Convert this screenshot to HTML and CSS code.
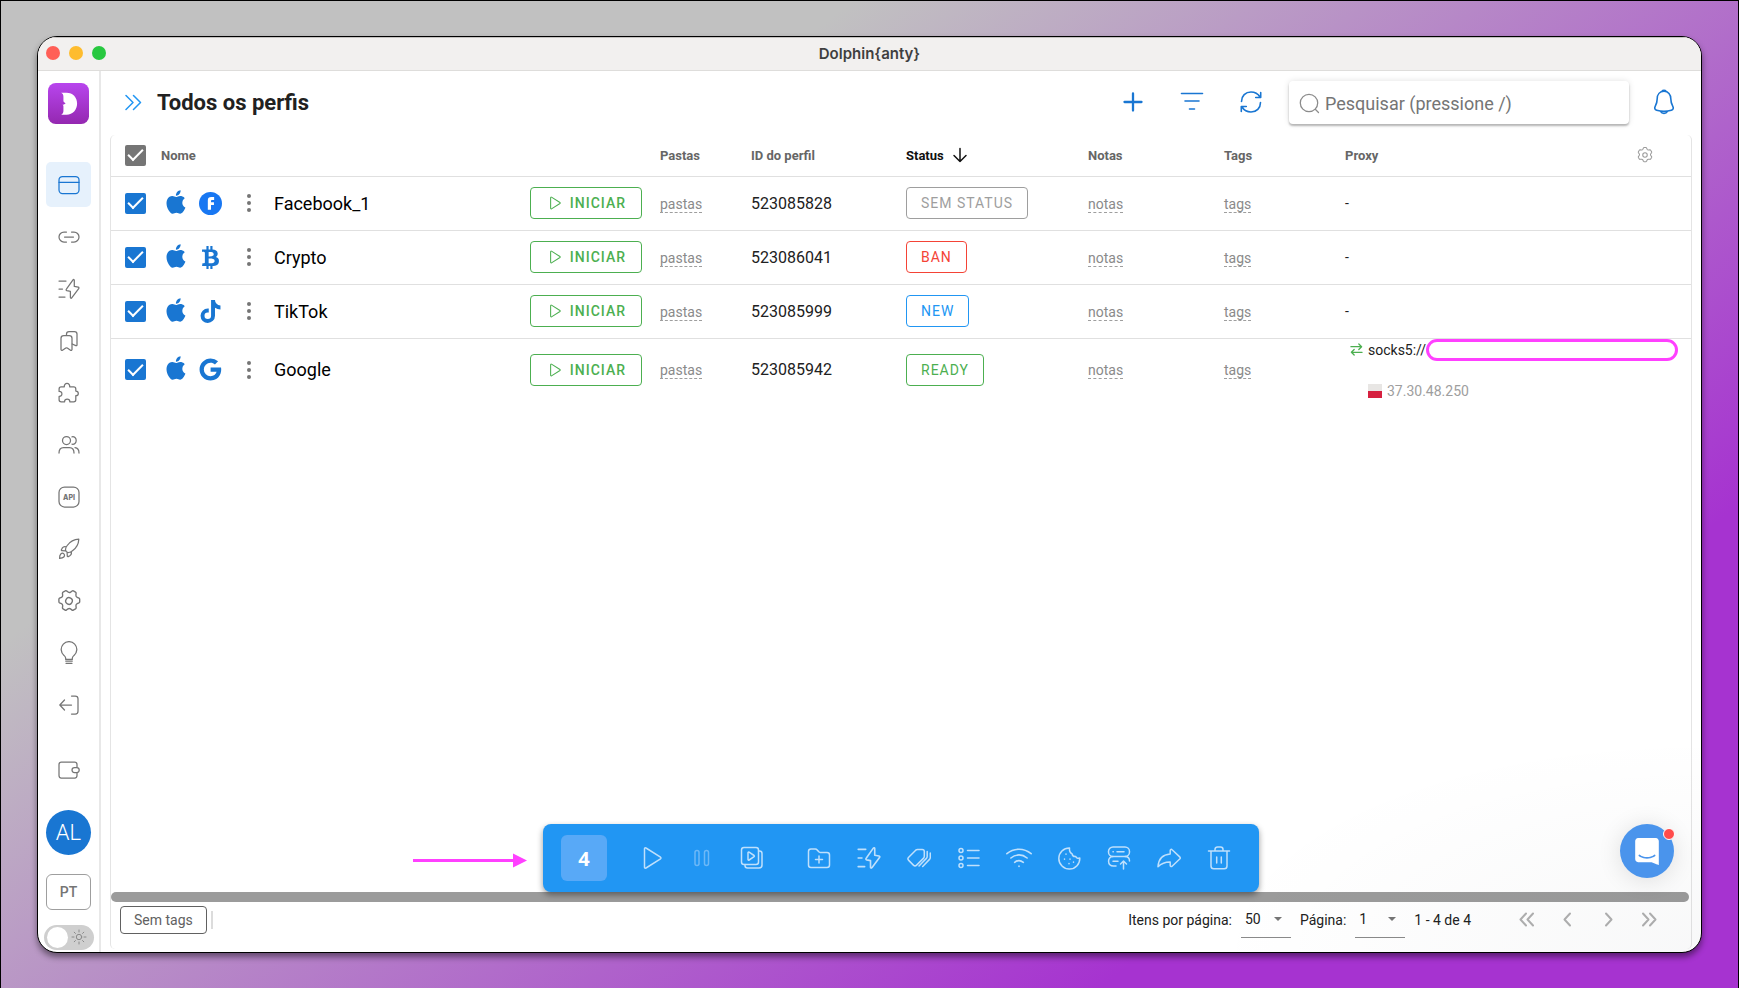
FILE: index.html
```html
<!DOCTYPE html>
<html lang="pt">
<head>
<meta charset="utf-8">
<meta name="viewport" content="width=device-width, initial-scale=1">
<title>Dolphin{anty}</title>
<link rel="stylesheet" href="styles.css">
</head>
<body class="desktop">

<svg class="sprite" aria-hidden="true">
  <symbol id="i-bolt" viewBox="0 0 24 24"><path d="M2 4h7M2 12h3.500M2 20h6"/><path d="M17.300 3.300v6.100l3.900.7c.8.200 1 .9.500 1.500l-7 9.300c-.5.700-1.300.4-1.300-.4v-6.100l-3.500-.7c-.8-.2-1-.9-.5-1.500l6.600-9.300c.5-.7 1.300-.4 1.300.4z"/></symbol>
  <symbol id="i-play" viewBox="0 0 24 24"><path d="M4.500 2.800v18.400c0 .8.900 1.200 1.500.8l14.500-9.100c.6-.4.6-1.300 0-1.700L6 2c-.6-.4-1.500 0-1.500.8z"/></symbol>
  <symbol id="i-gear" viewBox="0 0 24 24"><circle cx="12" cy="12" r="3"/><path d="M9.200 4.200 9.900 2.600c.2-.4.600-.6 1-.6h2.200c.4 0 .8.200 1 .6l.7 1.600c.4.800 1.200 1.200 2 1.100l1.800-.2c.4 0 .8.100 1 .500l1.200 2c.2.400.2.800 0 1.200l-1.100 1.500c-.5.700-.5 1.600 0 2.300l1.100 1.500c.2.400.2.800 0 1.200l-1.200 2c-.2.400-.6.500-1 .5l-1.800-.2c-.8-.1-1.600.4-2 1.100l-.7 1.700c-.2.400-.6.600-1 .6h-2.200c-.4 0-.8-.2-1-.6l-.7-1.700c-.4-.7-1.200-1.200-2-1.100l-1.800.2c-.4 0-.8-.1-1-.5l-1.200-2c-.2-.4-.2-.8 0-1.200l1.100-1.500c.5-.7.500-1.600 0-2.300L3.200 8.800c-.2-.4-.2-.8 0-1.200l1.200-2c.2-.4.600-.5 1-.5l1.800.2c.8.100 1.600-.3 2-1.100z"/></symbol>
  <symbol id="i-apple" viewBox="0 0 24 24"><path d="M18.710 19.500C17.880 20.740 17 21.950 15.660 21.970C14.320 22 13.890 21.180 12.370 21.180C10.840 21.180 10.370 21.950 9.100 22C7.790 22.050 6.800 20.680 5.960 19.470C4.250 17 2.940 12.450 4.700 9.390C5.570 7.870 7.130 6.910 8.820 6.880C10.100 6.860 11.320 7.750 12.110 7.750C12.890 7.750 14.370 6.680 15.920 6.840C16.570 6.870 18.390 7.100 19.560 8.820C19.470 8.880 17.390 10.100 17.410 12.630C17.440 15.650 20.060 16.660 20.090 16.670C20.060 16.740 19.670 18.110 18.710 19.500M13 3.500C13.730 2.670 14.940 2.040 15.940 2C16.070 3.170 15.600 4.350 14.900 5.190C14.210 6.040 13.070 6.700 11.950 6.610C11.800 5.460 12.360 4.260 13 3.500Z"/></symbol>
  <symbol id="i-dots" viewBox="0 0 6 20"><circle cx="3" cy="3" r="2"/><circle cx="3" cy="10" r="2"/><circle cx="3" cy="17" r="2"/></symbol>
</svg>

<div class="window">
  <header class="titlebar">
    <div class="lights"><span class="light red"></span><span class="light yellow"></span><span class="light green"></span></div>
    <span class="app-name">Dolphin{anty}</span>
  </header>

  <div class="body">
    <nav class="sidebar" aria-label="Menu principal">
      <a class="logo" href="#" aria-label="Dolphin">
        <svg viewBox="0 0 42 42" width="41" height="41"><defs><linearGradient id="lg" x1="0" y1="0" x2="0" y2="1"><stop offset="0" stop-color="#b845ee"/><stop offset="1" stop-color="#9428b0"/></linearGradient></defs><rect width="42" height="42" rx="8" fill="url(#lg)"/><path d="M13.500 10h5.500c6.500 0 10.800 4.700 10.800 11S25.500 32.500 19 32.500h-5.500c1.700-.8 2.300-2.300 2.300-4v-4.600c0-.8-.4-1.300-1.100-1.600 1.300-.1 2.600-.6 3.300-1.600-.9-.4-2.200-.8-2.200-2.400V14c0-1.700-.6-3.200-2.300-4z" fill="#fff"/></svg>
      </a>
      <a class="nav active" href="#" aria-label="Perfis"><svg class="ico" viewBox="0 0 24 24"><rect x="2" y="3.500" width="20" height="17" rx="3.500"/><path d="M2 9.300h20"/></svg></a>
      <a class="nav" href="#" aria-label="Proxy"><svg class="ico" viewBox="0 0 24 24"><path d="M9.500 7H7a5 5 0 0 0 0 10h2.500M14.500 7H17a5 5 0 0 1 0 10h-2.500M7.500 12h9"/></svg></a>
      <a class="nav" href="#" aria-label="Automação"><svg class="ico"><use href="#i-bolt"/></svg></a>
      <a class="nav" href="#" aria-label="Favoritos"><svg class="ico" viewBox="0 0 24 24"><path d="M4 9.200C4 7.500 5.200 6.500 6.800 6.500h5.400c1.600 0 2.800 1 2.800 2.700v11.300c0 .8-.9 1.100-1.500.7L10.300 19c-.5-.3-1-.3-1.500 0l-3.300 2.200c-.7.400-1.500 0-1.500-.8z"/><path d="M9.500 6.300V5c0-1.400 1.100-2.500 2.500-2.500h5.500C19 2.500 20 3.600 20 5v11c0 .6-.7.9-1.200.6L15.200 15"/></svg></a>
      <a class="nav" href="#" aria-label="Extensões"><svg class="ico" viewBox="0 0 24 24"><path d="M7.300 5.800c-.2-1.900 1-3.500 2.700-3.500s2.900 1.600 2.700 3.500h4c1.300 0 2.100.9 2.100 2.100v2.200c1.300 0 2.500.8 2.500 2.300s-1.200 2.300-2.500 2.300v4c0 1.200-.9 2.100-2.100 2.100h-3.900c.1-1.700-1-2.800-2.600-2.800s-2.700 1.100-2.600 2.800H4.200c-1.200 0-2.100-.9-2.100-2.100v-3.300c1.700.1 2.800-1 2.800-2.500s-1.100-2.600-2.800-2.500V7.900c0-1.200.9-2.100 2.100-2.100z"/></svg></a>
      <a class="nav" href="#" aria-label="Usuários"><svg class="ico" viewBox="0 0 24 24"><circle cx="9.500" cy="7.500" r="4"/><path d="M2 20c0-3.500 1.800-5.500 4.500-5.500h6c2.700 0 4.500 2 4.500 5.500M15 3.800c2.300-.5 4.200 1.300 4.200 3.700S17.300 11.700 15 11.200M18 14.700c2.400.3 4 2.200 4 5.300"/></svg></a>
      <a class="nav" href="#" aria-label="API"><svg class="ico" viewBox="0 0 24 24"><rect x="2" y="2" width="20" height="20" rx="5.500"/><text class="api" x="12" y="14.500" text-anchor="middle">API</text></svg></a>
      <a class="nav" href="#" aria-label="Cenários"><svg class="ico" viewBox="0 0 24 24"><path d="M21.800 2.200c-4.800.2-8.700 2.400-11.600 6.300-.9 1.200-1.600 2.400-1.700 3.700-.1 2 1.300 3.400 3.300 3.300 1.300-.1 2.500-.8 3.700-1.700 3.900-2.900 6.100-6.800 6.300-11.600zM9.200 9.800c-1.500-.5-3.200.1-4 1.400l-.8 1.500c-.2.500.1 1 .6 1l3.600.2M14.200 14.800c.5 1.500-.1 3.200-1.400 4l-1.500.8c-.5.200-1-.1-1-.6l-.2-3.600M2.600 21.400c-.1-2 .2-3.400 1.200-4.400.9-.9 2.300-.9 3.100-.1s.8 2.200-.1 3.100c-.9 1-2.200 1.300-4.200 1.400z"/></svg></a>
      <a class="nav" href="#" aria-label="Configurações"><svg class="ico" viewBox="1 1 22 22"><g transform="rotate(30 12 12)"><use href="#i-gear" width="24" height="24"/></g></svg></a>
      <a class="nav" href="#" aria-label="Dicas"><svg class="ico" viewBox="0 0 24 24"><path d="M8.700 17.300c0-1.300-.7-2-1.700-2.900a7.800 7.800 0 1 1 10 0c-1 .9-1.700 1.600-1.700 2.900v1.100H8.700zM8.700 20h6.600M9 22.300h6"/></svg></a>
      <a class="nav" href="#" aria-label="Sair"><svg class="ico" viewBox="0 0 24 24"><path d="M14.500 3h3.700C20 3 21 4 21 5.800v12.400c0 1.800-1 2.800-2.800 2.800h-3.700M14.500 12H3.300M7.500 7l-4.700 5 4.700 5"/></svg></a>
      <a class="nav wallet" href="#" aria-label="Carteira"><svg class="ico" viewBox="0 0 24 24"><path d="M20 9V6.500C20 5 19.200 4 17.700 4H4.300C2.800 4 2 5 2 6.500v11C2 19 2.800 20 4.300 20h13.400c1.500 0 2.300-1 2.300-2.500V15"/><path d="M17.500 9.500h2.200a2.500 2.500 0 0 1 0 5h-2.200a2.500 2.500 0 0 1 0-5z"/></svg></a>
      <button class="avatar" type="button">AL</button>
      <button class="lang" type="button">PT</button>
      <label class="theme">
        <input type="checkbox" class="switch" aria-label="Tema escuro">
        <svg class="sun" viewBox="0 0 16 16"><circle cx="8" cy="8" r="2.700"/><path d="M8 1v2M8 13v2M1 8h2M13 8h2M3.200 3.200l1.200 1.200M11.600 11.600l1.200 1.200M3.200 12.800l1.200-1.200M11.600 4.400l1.200-1.200"/></svg>
      </label>
    </nav>

    <main class="main">
      <div class="topbar">
        <button class="plain expand" type="button" aria-label="Expandir"><svg viewBox="0 0 17 17" width="17" height="17"><path d="M1 1.500l7 7-7 7M8.500 1.500l7 7-7 7"/></svg></button>
        <h1 class="title">Todos os perfis</h1>
        <div class="actions">
          <button class="plain" type="button" aria-label="Adicionar"><svg class="ico thick" viewBox="0 0 24 24"><path d="M12 3.500v17M3.500 12h17"/></svg></button>
          <button class="plain" type="button" aria-label="Filtrar"><svg class="ico mid" viewBox="0 0 24 24"><path d="M1.500 3.500h21M5 11h14M9.500 19h5"/></svg></button>
          <button class="plain" type="button" aria-label="Atualizar"><svg class="ico mid" viewBox="0 0 24 24"><path d="M2.500 11.500C2.500 6 6.500 2 12 2c4 0 7 1.800 9 5M21.700 2.500v5h-5M21.500 12.500C21.500 18 17.500 22 12 22c-4 0-7-1.800-9-5M2.300 21.500v-5h5"/></svg></button>
        </div>
        <label class="search">
          <svg viewBox="0 0 21 21" width="21" height="21"><circle cx="10" cy="10" r="8.700"/><path d="M16.500 16.500l3 3"/></svg>
          <input type="search" placeholder="Pesquisar (pressione /)" aria-label="Pesquisar">
        </label>
        <button class="plain bell" type="button" aria-label="Notificações"><svg viewBox="0 0 22 26" width="22" height="26"><path d="M11 2.300c-4.300 0-6.800 3.200-6.800 7.500 0 3.900-.8 5.500-2 7.500-1 1.800-.4 3.400 1.400 3.900 4.500 1.200 10.300 1.200 14.800 0 1.800-.5 2.400-2.100 1.400-3.900-1.200-2-2-3.600-2-7.500 0-4.300-2.500-7.500-6.800-7.500zM9 2.300c.8-1.200 3.200-1.200 4 0M7.500 22.300c1.500 2.700 5.500 2.700 7 0"/></svg></button>
      </div>

      <section class="card">
        <div class="scroll">
          <table class="grid">
            <colgroup><col class="c-check"><col><col class="c-folder"><col class="c-id"><col class="c-status"><col class="c-notes"><col class="c-tags"><col class="c-proxy"></colgroup>
            <thead>
              <tr>
                <th class="check"><input type="checkbox" class="box gray" checked aria-label="Selecionar tudo"></th>
                <th>Nome</th><th>Pastas</th><th>ID do perfil</th>
                <th class="sorted"><span class="sort">Status <svg viewBox="0 0 16 16" width="16" height="16"><path d="M8 1.500v13M2 8.500l6 6 6-6"/></svg></span></th>
                <th>Notas</th><th>Tags</th>
                <th><span class="proxy-head">Proxy <button class="plain" type="button" aria-label="Colunas"><svg class="cols"><use href="#i-gear"/></svg></button></span></th>
              </tr>
            </thead>
            <tbody>
              <tr>
                <td class="check"><input type="checkbox" class="box" checked aria-label="Facebook_1"></td>
                <td><div class="name"><svg class="os"><use href="#i-apple"/></svg><svg class="site" viewBox="0 0 24 24"><circle cx="12" cy="12" r="12" fill="#1877f2"/><path d="M9.200 18.500V8.800c0-2.400 1.300-3.500 3.500-3.500h3.100v3h-2c-.9 0-1.300.4-1.300 1.200v1.100h3.100v2.900h-3.100v5z" fill="#fff"/></svg><button class="plain dots" type="button" aria-label="Mais opções"><svg><use href="#i-dots"/></svg></button><span class="label">Facebook_1</span><button class="start" type="button"><svg><use href="#i-play"/></svg>INICIAR</button></div></td>
                <td><a class="edit" href="#">pastas</a></td><td class="id">523085828</td>
                <td><button class="chip none" type="button">SEM STATUS</button></td>
                <td><a class="edit" href="#">notas</a></td><td><a class="edit" href="#">tags</a></td><td>-</td>
              </tr>
              <tr>
                <td class="check"><input type="checkbox" class="box" checked aria-label="Crypto"></td>
                <td><div class="name"><svg class="os"><use href="#i-apple"/></svg><svg class="site" viewBox="0 0 384 512"><path d="M310.204 242.638c27.730-14.180 45.377-39.390 41.280-81.300-5.358-57.351-52.458-76.573-114.850-81.929V0h-48.528v77.203c-12.605 0-25.525.315-38.444.630V0h-48.530v79.409c-17.842.539-38.622.276-97.370 0v51.678c38.314-.678 58.417-3.140 63.023 21.427v217.429c-2.925 19.492-18.524 16.685-53.255 16.071L3.765 443.680c88.481 0 97.370.315 97.370.315V512h48.530v-67.060c13.234.315 26.154.315 38.444.315V512h48.528v-68.005c81.299-4.412 135.647-24.894 142.895-101.467 5.671-61.446-23.314-88.862-69.326-99.890zM150.608 134.553c27.415 0 113.126-8.507 113.126 48.528 0 54.515-85.710 48.212-113.126 48.212v-96.740zm0 251.776V279.821c32.772 0 133.127-9.138 133.127 53.255-.001 60.186-100.355 53.253-133.127 53.253z"/></svg><button class="plain dots" type="button" aria-label="Mais opções"><svg><use href="#i-dots"/></svg></button><span class="label">Crypto</span><button class="start" type="button"><svg><use href="#i-play"/></svg>INICIAR</button></div></td>
                <td><a class="edit" href="#">pastas</a></td><td class="id">523086041</td>
                <td><button class="chip ban" type="button">BAN</button></td>
                <td><a class="edit" href="#">notas</a></td><td><a class="edit" href="#">tags</a></td><td>-</td>
              </tr>
              <tr>
                <td class="check"><input type="checkbox" class="box" checked aria-label="TikTok"></td>
                <td><div class="name"><svg class="os"><use href="#i-apple"/></svg><svg class="site" viewBox="3.500 3 17 18.100"><path d="M16.600 5.820A4.280 4.280 0 0 1 15.540 3h-3.090v12.400a2.590 2.590 0 1 1-2.590-2.590c.27 0 .53.040.77.120V9.780a5.700 5.700 0 0 0-.77-.05A5.680 5.680 0 1 0 15.540 15.400V9.010a7.350 7.350 0 0 0 4.300 1.380V7.300a4.290 4.290 0 0 1-3.240-1.480z"/></svg><button class="plain dots" type="button" aria-label="Mais opções"><svg><use href="#i-dots"/></svg></button><span class="label">TikTok</span><button class="start" type="button"><svg><use href="#i-play"/></svg>INICIAR</button></div></td>
                <td><a class="edit" href="#">pastas</a></td><td class="id">523085999</td>
                <td><button class="chip new" type="button">NEW</button></td>
                <td><a class="edit" href="#">notas</a></td><td><a class="edit" href="#">tags</a></td><td>-</td>
              </tr>
              <tr class="last">
                <td class="check"><input type="checkbox" class="box" checked aria-label="Google"></td>
                <td><div class="name"><svg class="os"><use href="#i-apple"/></svg><svg class="site" viewBox="2.300 1.600 20.300 20.800"><path d="M12.545 10.239v3.821h5.445c-.712 2.315-2.647 3.972-5.445 3.972a6.033 6.033 0 1 1 0-12.064c1.498 0 2.866.549 3.921 1.453l2.814-2.814A9.969 9.969 0 0 0 12.545 2C7.021 2 2.543 6.477 2.543 12s4.478 10 10.002 10c8.396 0 10.249-7.850 9.426-11.748z"/></svg><button class="plain dots" type="button" aria-label="Mais opções"><svg><use href="#i-dots"/></svg></button><span class="label">Google</span><button class="start" type="button"><svg><use href="#i-play"/></svg>INICIAR</button></div></td>
                <td><a class="edit" href="#">pastas</a></td><td class="id">523085942</td>
                <td><button class="chip ready" type="button">READY</button></td>
                <td><a class="edit" href="#">notas</a></td><td><a class="edit" href="#">tags</a></td>
                <td><div class="proxy">
                  <div class="proxy-line"><svg class="swap" viewBox="0 0 14 14"><path d="M1 4h11.500M9.500 1l3 3-3 3M13 10H1.500M4.500 7l-3 3 3 3"/></svg><span>socks5://</span><span class="mask"></span></div>
                  <div class="proxy-ip"><span class="flag"></span>37.30.48.250</div>
                </div></td>
              </tr>
            </tbody>
          </table>
        </div>
        <div class="scrollbar"></div>
        <footer class="foot">
          <button class="tags-btn" type="button">Sem tags</button><span class="bar"></span>
          <div class="pager">
            <label class="field"><span>Itens por página:</span><span class="pick"><select><option>50</option></select></span></label>
            <label class="field"><span>Página:</span><span class="pick"><select><option>1</option></select></span></label>
            <span>1 - 4 de 4</span>
            <div class="pages">
              <button class="plain" type="button" aria-label="Primeira"><svg viewBox="0 0 17 17"><path d="M8 2.500L2.500 8.500 8 14.500M15 2.500L9.500 8.500l5.500 6"/></svg></button>
              <button class="plain" type="button" aria-label="Anterior"><svg viewBox="0 0 17 17"><path d="M11 2.500l-5.500 6 5.500 6"/></svg></button>
              <button class="plain" type="button" aria-label="Próxima"><svg viewBox="0 0 17 17"><path d="M6 2.500l5.500 6-5.500 6"/></svg></button>
              <button class="plain" type="button" aria-label="Última"><svg viewBox="0 0 17 17"><path d="M2 2.500l5.500 6-5.500 6M9 2.500l5.500 6-5.500 6"/></svg></button>
            </div>
          </div>
        </footer>
      </section>

      <div class="glow"></div>
      <div class="bulk" role="toolbar" aria-label="Ações em massa">
        <svg class="pointer" viewBox="0 0 114 16"><path d="M0 8.500h102" stroke="#ff40ff" stroke-width="3"/><path d="M100 1.500l14 7-14 7z" fill="#ff40ff"/></svg>
        <span class="count">4</span>
        <div class="tools first">
          <button class="plain" type="button" aria-label="Iniciar"><svg class="tool"><use href="#i-play"/></svg></button>
          <button class="plain off" type="button" aria-label="Pausar"><svg class="tool" viewBox="0 0 24 24"><rect x="5" y="4.500" width="4" height="15" rx="2"/><rect x="14.500" y="4.500" width="4" height="15" rx="2"/></svg></button>
          <button class="plain" type="button" aria-label="Executar cenário"><svg class="tool" viewBox="0 0 24 24"><rect x="1.500" y="1.500" width="17" height="17" rx="2.500"/><path d="M8 6.800v6.600c0 .6.600.9 1.100.6l5-3.300c.4-.3.400-.9 0-1.200l-5-3.300c-.5-.3-1.100 0-1.100.6zM18.500 5h1c1.500 0 2.500 1 2.500 2.500V19c0 1.700-1.300 3-3 3H7.500C6 22 5 21 5 19.500v-1"/></svg></button>
        </div>
        <div class="tools">
          <button class="plain" type="button" aria-label="Adicionar à pasta"><svg class="tool" viewBox="0 0 24 24"><path d="M1.500 5.500c0-1.500 1-2.500 2.500-2.500h4.200c.8 0 1.500.3 2 .9l1.600 1.900c.4.400.8.600 1.300.6H20c1.500 0 2.500 1 2.500 2.500v10c0 1.500-1 2.500-2.500 2.500H4c-1.500 0-2.500-1-2.500-2.500zM12 10v7M8.500 13.500h7"/></svg></button>
          <button class="plain" type="button" aria-label="Automação"><svg class="tool wide"><use href="#i-bolt"/></svg></button>
          <button class="plain" type="button" aria-label="Tags"><svg class="tool" viewBox="0 0 24 24"><path d="M15.200 3.500h-4.700c-.7 0-1.300.3-1.800.7L1.700 11.200c-1 1-1 2.200 0 3.200l4.700 4.700c1 1 2.200 1 3.200 0l7-7c.5-.5.700-1.100.7-1.800V5.500c0-1.200-.9-2-2.100-2zM20.200 5.500v5c0 .8-.3 1.400-.8 1.900l-7.400 7.600M23.300 7v4.500c0 .8-.3 1.400-.8 1.900l-6.800 7"/></svg></button>
          <button class="plain" type="button" aria-label="Status"><svg class="tool" viewBox="0 0 24 24"><circle cx="4" cy="4.500" r="2"/><circle cx="4" cy="12" r="2"/><circle cx="4" cy="19.500" r="2"/><path d="M10.500 4.500H22M10.500 12H22M10.500 19.500H22"/></svg></button>
          <button class="plain" type="button" aria-label="Proxy"><svg class="tool wide" viewBox="0 0 24 24"><path d="M.8 8C7.500 2.500 16.500 2.500 23.200 8M4.500 12c4.500-3.800 10.500-3.800 15 0M8 16c2.500-2 5.500-2 8 0M12 19.500v.3"/></svg></button>
          <button class="plain" type="button" aria-label="Cookies"><svg class="tool" viewBox="0 0 24 24"><path d="M12.500 2a10.500 10.500 0 1 0 10.300 10c-2 .8-3.500.1-4-1.500-1.900.3-3.400-.8-3.700-2.700-1.800-.9-2.900-3.200-2.600-5.800zM9 8v.3M7.500 13v.3M13 13v.3M12 17.500v.3M16.500 16v.3"/></svg></button>
          <button class="plain" type="button" aria-label="Servidor"><svg class="tool" viewBox="0 0 24 24"><rect x="1.500" y="1" width="21" height="9.500" rx="4.500"/><path d="M6 5.700h.3M10 5.700h7M6 10.500c-6 0-6 9.500.5 9.500h2.500M18 10.500c3 0 4.500 1.700 4.500 4.500M6 15.200h5M16.500 23v-8M13.500 18l3-3 3 3"/></svg></button>
          <button class="plain" type="button" aria-label="Compartilhar"><svg class="tool" viewBox="0 0 24 24"><path d="M13.200 8V4.500c0-1 1.200-1.500 1.900-.8l7.600 7.200c.6.600.6 1.500 0 2.100l-7.600 7.200c-.7.700-1.900.2-1.900-.8v-3.500c-5-.1-8.600 1.300-12.200 4.800C1.500 13.500 5.500 8.500 13.200 8z"/></svg></button>
          <button class="plain" type="button" aria-label="Excluir"><svg class="tool" viewBox="0 0 24 24"><path d="M1.500 5h21M4 5v15c0 1.800 1 2.800 2.800 2.800h10.400c1.800 0 2.800-1 2.800-2.800V5M8 5V3.500C8 1.800 9 1 10.500 1h3C15 1 16 1.800 16 3.500V5M9.700 11v6M14.300 11v6"/></svg></button>
        </div>
      </div>
      <button class="chat" type="button" aria-label="Chat"><svg viewBox="0 0 28 32" width="24" height="27"><path fill="#fff" d="M28 32s-4.714-1.855-8.527-3.340H3.437C1.540 28.660 0 27.026 0 25.013V3.644C0 1.633 1.540 0 3.437 0h21.125c1.898 0 3.437 1.632 3.437 3.645v18.404H28V32zm-4.139-11.982a.88.88 0 0 0-1.292-.105c-.03.026-3.015 2.681-8.570 2.681-5.486 0-8.517-2.636-8.571-2.684a.88.88 0 0 0-1.290.107 1.010 1.010 0 0 0-.219.708.992.992 0 0 0 .318.664c.142.128 3.537 3.150 9.762 3.150 6.226 0 9.621-3.022 9.763-3.150a.992.992 0 0 0 .317-.664 1.010 1.010 0 0 0-.218-.707z"/></svg></button>
    </main>
  </div>
</div>
</body>
</html>
```

FILE: styles.css
```css
*, *::before, *::after { box-sizing: border-box; }

.desktop {
  display: flex;
  min-height: 100vh;
  margin: 0;
  padding: 35px 36px;
  border: 1px solid #000;
  background: linear-gradient(143deg, #c1c1c1 28%, #a633d0 79%);
  font-family: Roboto, "Liberation Sans", sans-serif;
  font-size: 14px;
  color: #212121;
}

button, input, select { font: inherit; color: inherit; }
button { cursor: pointer; }
a { color: inherit; text-decoration: none; }
svg { flex: none; fill: none; stroke-linecap: round; stroke-linejoin: round; }
.sprite { position: absolute; width: 0; height: 0; }

.plain {
  display: flex;
  align-items: center;
  justify-content: center;
  padding: 0;
  border: 0;
  background: none;
}

/* window frame */
.window {
  flex: 1;
  display: flex;
  flex-direction: column;
  min-width: 0;
  border: 1px solid #000;
  border-radius: 20px;
  background: #fff;
  overflow: hidden;
  box-shadow: 0 4px 6px rgba(0, 0, 0, .45);
}
.titlebar {
  display: grid;
  grid-template-columns: 1fr auto 1fr;
  align-items: center;
  height: 34px;
  padding: 0 8px 2px;
  border-top: 1px solid #c4c2c0;
  border-bottom: 1px solid #dedddb;
  background: #f2f0ef;
}
.lights { display: flex; gap: 9px; }
.light { width: 14px; height: 14px; border-radius: 50%; }
.red { background: #ff5f57; }
.yellow { background: #febc2e; }
.green { background: #28c840; }
.app-name { font: 600 15px Inter, sans-serif; color: #3f3f3f; }

.body { flex: 1; display: flex; min-height: 0; }

/* sidebar */
.sidebar {
  display: flex;
  flex-direction: column;
  align-items: center;
  width: 63px;
  padding: 12px 0 2px;
  border-right: 2px solid #e8e8e8;
  color: #757575;
}
.logo { display: flex; margin-bottom: 38px; }
.nav {
  display: flex;
  align-items: center;
  justify-content: center;
  width: 45px;
  height: 45px;
  margin-bottom: 7px;
  border-radius: 5px;
}
.nav.active { background: #e6f1fc; color: #1976d2; }
.nav.wallet { margin-top: 13px; margin-bottom: 18px; }
.ico { width: 24px; height: 24px; stroke: currentColor; stroke-width: 1.3; }
.nav .ico { stroke-width: 1.25; }
.api { font: 800 7px Inter, sans-serif; fill: currentColor; stroke: none; }
.avatar {
  width: 45px;
  height: 45px;
  padding: 0;
  border: 0;
  border-radius: 50%;
  background: #1976d2;
  color: #fff;
  font-size: 22px;
  font-weight: 300;
}
.lang {
  width: 45px;
  height: 36px;
  margin: 19px 0 15px;
  padding: 0;
  border: 1px solid #9e9e9e;
  border-radius: 6px;
  background: #fff;
  font-weight: 500;
}
.theme { position: relative; display: flex; }
.switch {
  appearance: none;
  display: flex;
  align-items: center;
  width: 50px;
  height: 25px;
  margin: 0;
  padding: 0 3px;
  border-radius: 13px;
  background: #cfcfcf;
}
.switch::before { content: ""; width: 21px; height: 21px; border-radius: 50%; background: #fff; }
.sun { position: absolute; right: 7px; top: 4px; width: 16px; height: 16px; stroke: #8a8a8a; }

/* main area */
.main {
  position: relative;
  flex: 1;
  display: flex;
  flex-direction: column;
  min-width: 0;
  padding: 0 9px 3px;
}
.topbar { display: flex; align-items: center; height: 64px; padding: 0 17px 2px 15px; }
.expand svg { stroke: #2196f3; stroke-width: 1.5; }
.title { margin: 0 0 0 15px; font-size: 22px; font-weight: 700; }
.actions { display: flex; gap: 35px; margin-left: auto; color: #1976d2; }
.actions .ico { stroke-width: 1.6; }
.actions .thick { stroke-width: 2.3; }
.search {
  display: flex;
  align-items: center;
  gap: 5px;
  width: 340px;
  height: 43px;
  margin: 0 24px 0 26px;
  padding: 2px 10px 0;
  border-radius: 4px;
  box-shadow: 0 2px 2px rgba(0, 0, 0, .25), 0 0 6px rgba(0, 0, 0, .12);
}
.search svg { stroke: #8c8c8c; stroke-width: 1.3; }
.search input { flex: 1; min-width: 0; padding: 0; border: 0; outline: 0; background: none; font-size: 18px; }
.search input::placeholder { color: #757575; opacity: 1; }
.bell svg { stroke: #1976d2; stroke-width: 1.6; }

.card {
  flex: 1;
  display: flex;
  flex-direction: column;
  border: solid #e4e4e4;
  border-width: 0 1px;
  border-radius: 5px;
}
.scroll { flex: 1; }

/* table */
.grid { width: 100%; border-collapse: collapse; table-layout: fixed; }
.c-check { width: 50px; }
.c-folder { width: 91px; }
.c-id { width: 155px; }
.c-status { width: 182px; }
.c-notes { width: 136px; }
.c-tags { width: 121px; }
.c-proxy { width: 346px; }
.grid th, .grid td { padding: 0; text-align: left; vertical-align: middle; }
.grid th { height: 41px; border-bottom: 1px solid #e0e0e0; font-size: 13px; font-weight: 700; color: #666; }
.grid td { height: 54px; border-bottom: 1px solid #e0e0e0; }
.grid .last td { height: 62px; border-bottom: 0; }
.grid .check { padding-left: 14px; }
.grid th.sorted { color: #111; }
.sort { display: flex; align-items: center; gap: 8px; }
.sort svg { stroke: #111; stroke-width: 1.5; }
.proxy-head { display: flex; justify-content: space-between; align-items: center; padding-right: 37px; }
.cols { width: 18px; height: 18px; stroke: #9a9a9a; stroke-width: 1.4; }

.box {
  appearance: none;
  display: grid;
  place-items: center;
  width: 21px;
  height: 21px;
  margin: 0;
  border-radius: 2px;
  background: #1976d2;
}
.box.gray { background: #757575; }
.box::after {
  content: "";
  width: 15px;
  height: 8px;
  margin-top: -4px;
  border: solid #fff;
  border-width: 0 0 2px 2px;
  transform: rotate(-45deg);
}

.name { display: flex; align-items: center; padding-right: 18px; }
.name .os { width: 28px; height: 28px; margin-left: 1px; margin-right: 9px; margin-bottom: 3px; fill: #1976d2; }
.name .site { width: 23px; height: 23px; fill: #1976d2; }
.dots { width: 16px; height: 24px; margin: 0 17px 0 19px; }
.dots svg { width: 6px; height: 20px; fill: #757575; }
.label { font-size: 18px; color: #000; }
.start, .chip {
  display: inline-flex;
  align-items: center;
  height: 32px;
  border: 1px solid currentColor;
  border-radius: 4px;
  background: #fff;
  font-size: 14px;
  letter-spacing: 1px;
}
.start { gap: 8px; margin-left: auto; padding: 0 15px 0 17px; color: #4caf50; font-weight: 500; }
.start svg { width: 14px; height: 14px; stroke: currentColor; stroke-width: 1.8; }
.chip { padding: 0 14px; }
.none { color: #9e9e9e; }
.ban { color: #f44336; }
.new { color: #2196f3; }
.ready { color: #4caf50; }
.edit { display: inline-block; padding-top: 2px; border-bottom: 1px dashed #9e9e9e; color: #8a8a8a; }
.id { font-size: 16px; }

.proxy { display: flex; flex-direction: column; gap: 22px; padding: 0 13px 2px 5px; }
.proxy-line, .proxy-ip { display: flex; align-items: center; }
.swap { width: 13px; height: 13px; margin-right: 5px; stroke: #4caf50; stroke-width: 1.4; }
.mask { flex: 1; height: 22px; border: 3px solid #ff40ff; border-radius: 11px; }
.proxy-ip { gap: 5px; margin-left: 18px; color: #9e9e9e; }
.flag { width: 14px; height: 14px; background: linear-gradient(#e8e6e4 50%, #d6203f 50%); }

/* footer */
.scrollbar { height: 10px; margin: 0 2px 0 0; border-radius: 5px; background: #9b9b9b; }
.foot { display: flex; align-items: center; height: 47px; padding: 0 33px 12px 9px; }
.tags-btn { height: 28px; padding: 0 13px; border: 1px solid #616161; border-radius: 4px; background: #fff; color: #616161; }
.bar { width: 2px; height: 18px; margin-left: 4px; background: #dcdcdc; }
.pager { display: flex; align-items: center; gap: 9px; margin-left: auto; }
.field { display: flex; align-items: center; gap: 9px; height: 18px; }
.pick { position: relative; }
.pick::after {
  content: "";
  position: absolute;
  right: 9px;
  top: 16px;
  border: 4px solid transparent;
  border-top-color: #757575;
  border-bottom: 0;
}
.pick select {
  appearance: none;
  width: 50px;
  height: 37px;
  padding: 0 4px;
  border: 0;
  border-bottom: 1px solid #8a8a8a;
  border-radius: 0;
  background: none;
}
.pick select:focus { outline: 0; }
.pages { display: flex; gap: 24px; margin-left: 38px; }
.pages svg { width: 17px; height: 17px; stroke: #b0b0b0; stroke-width: 2; }

/* floating layers */
.glow {
  position: absolute;
  right: 0;
  bottom: 0;
  width: 500px;
  height: 220px;
  background: radial-gradient(ellipse at bottom right, rgba(29, 39, 54, .03), rgba(29, 39, 54, 0) 70%);
  pointer-events: none;
}
.bulk {
  position: absolute;
  left: 50%;
  bottom: 60px;
  display: flex;
  align-items: center;
  height: 68px;
  padding: 0 27px 0 18px;
  border-radius: 8px;
  background: #2196f3;
  box-shadow: 0 3px 6px rgba(0, 0, 0, .4);
  transform: translateX(-50%);
}
.pointer { position: absolute; right: 100%; width: 114px; height: 16px; margin-right: 16px; margin-top: 4px; stroke-linecap: butt; }
.count {
  display: grid;
  place-items: center;
  width: 46px;
  height: 46px;
  border-radius: 6px;
  background: #58a9f7;
  color: #fff;
  font: 700 20px "Open Sans", sans-serif;
}
.tools { display: flex; gap: 24px; }
.tools.first { margin: 0 41px 0 32px; }
.tools .plain { width: 26px; height: 26px; color: #bfe0fc; }
.tools .off { color: #6cb8f7; }
.tool { width: 24px; height: 24px; stroke: currentColor; stroke-width: 1.5; }
.tool.wide { width: 26px; height: 26px; }
.chat {
  position: absolute;
  right: 27px;
  bottom: 74px;
  display: grid;
  place-items: center;
  width: 54px;
  height: 54px;
  padding: 0;
  border: 0;
  border-radius: 50%;
  background: #4a94ec;
  box-shadow: 0 2px 24px rgba(0, 0, 0, .12);
}
.chat::after {
  content: "";
  position: absolute;
  right: -1px;
  top: 4px;
  width: 12px;
  height: 12px;
  border: 1px solid #fff;
  border-radius: 50%;
  background: #ff4b4b;
}
```
